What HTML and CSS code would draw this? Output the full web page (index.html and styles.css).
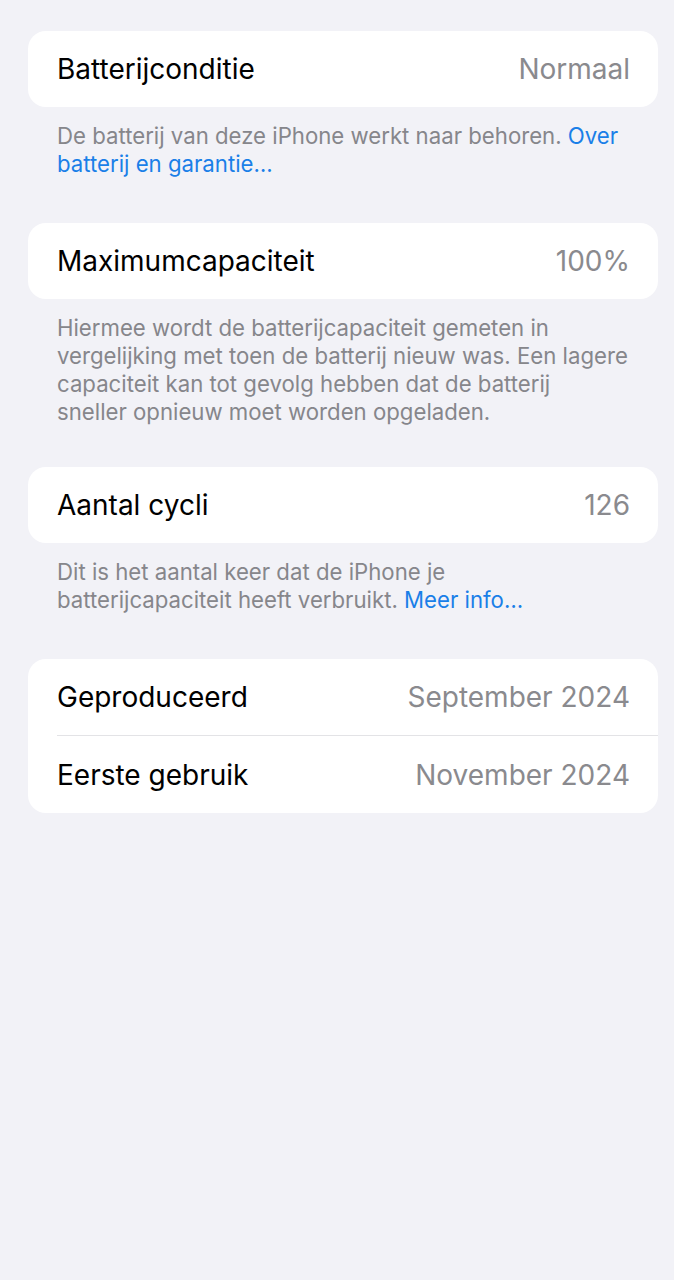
FILE: index.html
```html
<!DOCTYPE html>
<html lang="nl">
<head>
    <meta charset="UTF-8">
    <meta name="viewport" content="width=device-width, initial-scale=1.0">
    <title>Batterijconditie</title>
    <link rel="stylesheet" href="styles.css">
</head>
<body>
    <div class="page">

        <div class="group">
            <div class="row">
                <span class="label">Batterijconditie</span>
                <span class="value">Normaal</span>
            </div>
        </div>
        <p class="footer">De batterij van deze iPhone werkt naar behoren. <a href="#">Over batterij en garantie…</a></p>

        <div class="group">
            <div class="row">
                <span class="label">Maximumcapaciteit</span>
                <span class="value">100%</span>
            </div>
        </div>
        <p class="footer tight">Hiermee wordt de batterijcapaciteit gemeten in vergelijking met toen de batterij nieuw was. Een lagere capaciteit kan tot gevolg hebben dat de batterij<br>sneller opnieuw moet worden opgeladen.</p>

        <div class="group">
            <div class="row">
                <span class="label">Aantal cycli</span>
                <span class="value">126</span>
            </div>
        </div>
        <p class="footer">Dit is het aantal keer dat de iPhone je<br>batterijcapaciteit heeft verbruikt. <a href="#">Meer info…</a></p>

        <div class="group">
            <div class="row">
                <span class="label">Geproduceerd</span>
                <span class="value">September 2024</span>
            </div>
            <div class="row">
                <span class="label">Eerste gebruik</span>
                <span class="value">November 2024</span>
            </div>
        </div>

    </div>
</body>
</html>
```

FILE: styles.css
```css
body {
    margin: 0;
    background: #f2f2f7;
    font-family: Inter, "Noto Sans", sans-serif;
    -webkit-font-smoothing: antialiased;
}

.page {
    padding: 31px 16px 0 28px;
}

.group {
    background: #ffffff;
    border-radius: 18px;
    overflow: hidden;
}

.row {
    display: flex;
    justify-content: space-between;
    align-items: center;
    height: 76px;
    padding: 0 28px 0 29px;
    font-size: 28px;
}

/* inset separator between rows */
.row + .row {
    border-top: 1px solid #e3e3e6;
    margin-left: 29px;
    padding-left: 0;
    height: 77px;
}

.label {
    color: #000000;
}

.value {
    color: #8a8a8e;
}

.footer {
    margin: 0;
    padding: 15px 28px 45px 29px;
    font-size: 22.2px;
    line-height: 28px;
    color: #86868b;
}

.footer.tight {
    padding-bottom: 41px;
}

.footer a {
    color: #1a7fe8;
    text-decoration: none;
}
```
